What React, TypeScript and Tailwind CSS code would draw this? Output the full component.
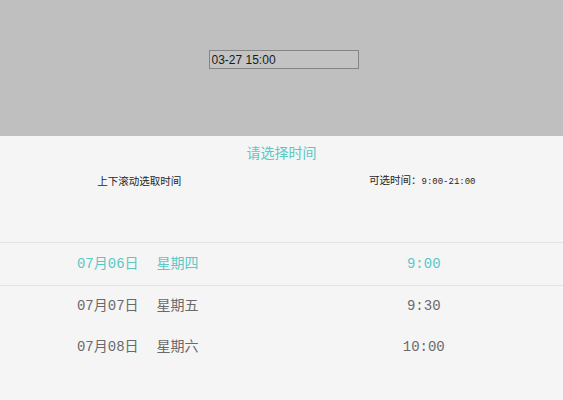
const rows = [
  { date: '07月06日', week: '星期四', time: '9:00', active: true },
  { date: '07月07日', week: '星期五', time: '9:30', active: false },
  { date: '07月08日', week: '星期六', time: '10:00', active: false },
];

export default function App() {
  return (
    <div className="w-[563px] h-[400px] flex flex-col bg-[#f5f5f5] overflow-hidden">
      {/* top overlay area with input */}
      <div className="h-[136px] shrink-0 bg-[#bfbfbf] flex justify-center pt-[50px] pl-1">
        <input
          readOnly
          value="03-27 15:00"
          className="w-[150px] h-[19px] border border-[#858585] bg-[#c3c3c3] px-[2px] text-[12px] text-[#1a1a1a] outline-none font-['Liberation_Sans',sans-serif]"
        />
      </div>

      {/* picker panel */}
      <div className="flex-1 flex flex-col font-['Liberation_Mono','Noto_Sans_CJK_SC',monospace]">
        <div className="h-7 pt-1 text-center text-[14px] leading-6 text-[#5cc7c4] font-['Noto_Sans_CJK_SC',sans-serif]">
          请选择时间
        </div>
        <div className="mt-[9px] h-4 flex items-center text-[10.5px] leading-4 text-[#1f1f1f]">
          <div className="w-1/2 text-center pr-[3px] font-['Noto_Sans_CJK_SC',sans-serif]">上下滚动选取时间</div>
          <div className="w-1/2 text-center">
            <span className="font-['Noto_Sans_CJK_SC',sans-serif]">可选时间：</span>
            <span className="text-[9px]">9:00-21:00</span>
          </div>
        </div>

        <div className="mt-[53px] flex flex-col">
          {rows.map((r) => (
            <div
              key={r.date}
              className={
                r.active
                  ? 'flex h-[44px] items-center border-y border-[#e2e2e2] text-[14px] text-[#5cc7c4]'
                  : 'flex h-[41px] items-center text-[14px] text-[#6a6a6a]'
              }
            >
              <div className="w-1/2 flex justify-center gap-[18px] pr-[6px]">
                <span>{r.date}</span>
                <span>{r.week}</span>
              </div>
              <div className="w-1/2 text-center pl-[3px]">{r.time}</div>
            </div>
          ))}
        </div>
      </div>
    </div>
  );
}
